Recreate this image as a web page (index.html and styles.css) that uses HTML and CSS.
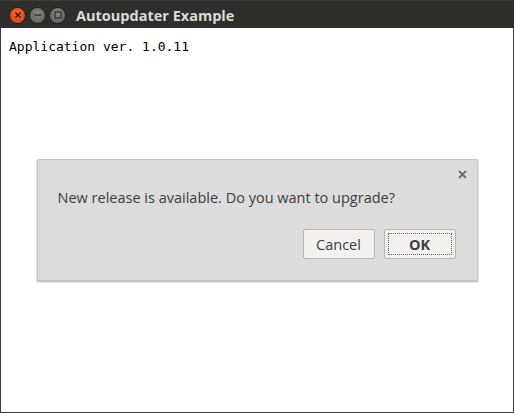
FILE: index.html
```html
<!DOCTYPE html>
<html>
<head>
<meta charset="utf-8">
<link rel="stylesheet" href="styles.css">
</head>
<body>
<div class="window">
  <div class="titlebar">
    <div class="controls">
      <span class="wbtn close"><svg width="8" height="8" viewBox="0 0 8 8"><path d="M1.5 1.5 L6.5 6.5 M6.5 1.5 L1.5 6.5" stroke="#3a1408" stroke-width="1.4" fill="none"/></svg></span>
      <span class="wbtn min"><svg width="8" height="8" viewBox="0 0 8 8"><path d="M0.5 4 H7.5" stroke="#2e2e2c" stroke-width="1.3" fill="none"/></svg></span>
      <span class="wbtn max"><svg width="8" height="8" viewBox="0 0 8 8"><rect x="1" y="1" width="6" height="6" stroke="#2e2e2c" stroke-width="1.2" fill="none"/></svg></span>
    </div>
    <div class="title">Autoupdater Example</div>
  </div>
  <div class="content">
    <div class="version">Application ver. 1.0.11</div>
    <div class="overlay">
      <div class="dialog">
        <div class="dclose"><svg width="9" height="9" viewBox="0 0 9 9"><path d="M1 1 L8 8 M8 1 L1 8" stroke="#6b6b6b" stroke-width="1.8" fill="none"/></svg></div>
        <div class="message">New release is available. Do you want to upgrade?</div>
        <div class="buttons">
          <button class="btn">Cancel</button>
          <button class="btn ok"><span class="focus">OK</span></button>
        </div>
      </div>
    </div>
  </div>
</div>
</body>
</html>
```
FILE: styles.css
```css
html, body {
  margin: 0;
  padding: 0;
  background: #ffffff;
}
.window {
  width: 514px;
  height: 413px;
  display: flex;
  flex-direction: column;
}
.titlebar {
  height: 28px;
  box-sizing: border-box;
  background: #2e2e2d;
  border-top: 1px solid #3d3d3b;
  display: flex;
  align-items: center;
}
.controls {
  display: flex;
  align-items: center;
  margin-left: 9px;
  gap: 3px;
  padding-top: 1px;
}
.wbtn {
  width: 17px;
  height: 17px;
  border-radius: 50%;
  display: flex;
  align-items: center;
  justify-content: center;
  box-sizing: border-box;
}
.close {
  background: radial-gradient(circle at 50% 35%, #f26b3a, #df4a16 70%);
  border: 1px solid #1e1e1c;
}
.min, .max {
  background: radial-gradient(circle at 50% 35%, #86857f, #67665f 75%);
  border: 1px solid #1e1e1c;
}
.title {
  margin-left: 10px;
  font-family: "Open Sans", sans-serif;
  font-weight: bold;
  font-size: 14.5px;
  color: #dfdbd2;
  padding-top: 1px;
}
.content {
  flex: 1;
  position: relative;
  border: 1px solid #3c3c3c;
  border-top: none;
  background: #ffffff;
}
.version {
  font-family: "DejaVu Sans Mono", monospace;
  font-size: 13px;
  color: #000;
  margin: 11px 0 0 8px;
}
.overlay {
  position: absolute;
  inset: 0;
  display: flex;
  align-items: center;
  justify-content: center;
}
.dialog {
  position: relative;
  width: 441px;
  height: 122px;
  box-sizing: border-box;
  background: #dcdcdc;
  border: 1px solid #c4c4c4;
  border-radius: 1px;
  box-shadow: 0 1px 2px rgba(0,0,0,0.35);
  padding: 28px 21px 0 20px;
  display: flex;
  flex-direction: column;
}
.dclose {
  position: absolute;
  right: 10px;
  top: 10px;
  width: 9px;
  height: 9px;
  display: flex;
}
.message {
  font-family: "Open Sans", sans-serif;
  font-size: 14.5px;
  color: #3c3c3c;
  line-height: 20px;
}
.buttons {
  display: flex;
  justify-content: flex-end;
  gap: 9px;
  margin-top: 21px;
}
.btn {
  width: 72px;
  height: 30px;
  box-sizing: border-box;
  background: #f2f1f0;
  border: 1px solid #b6b6b4;
  border-radius: 2px;
  font-family: "Open Sans", sans-serif;
  font-size: 14.5px;
  color: #3c3c3c;
  padding: 0;
  display: flex;
  align-items: center;
  justify-content: center;
}
.btn.ok {
  padding: 3px;
  font-weight: bold;
}
.focus {
  flex: 1;
  align-self: stretch;
  border: 1px dotted #5a5a5a;
  display: flex;
  align-items: center;
  justify-content: center;
}
```
